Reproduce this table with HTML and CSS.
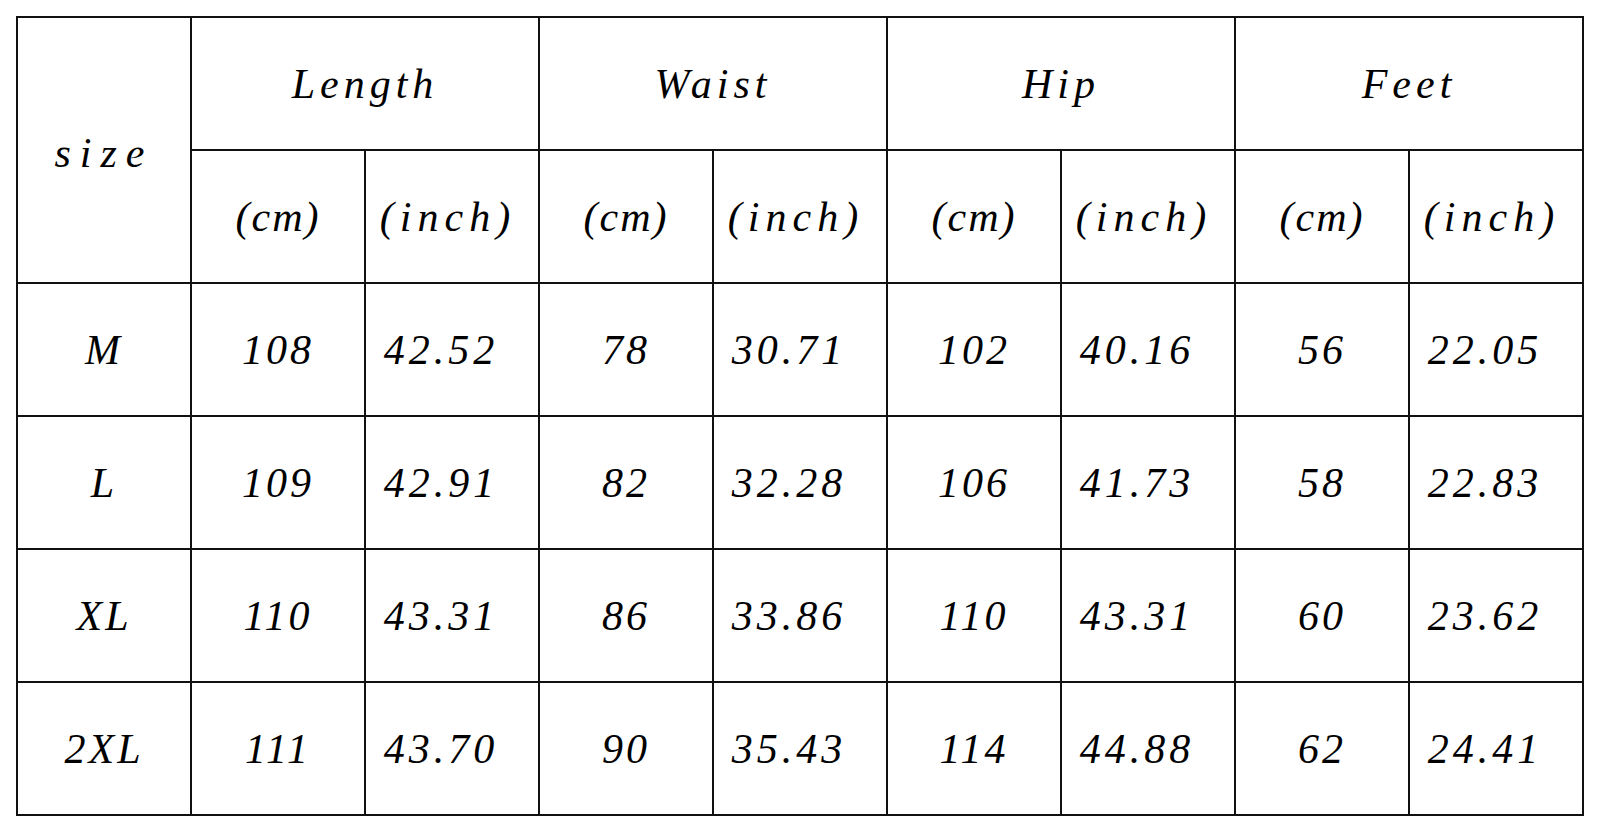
FILE: index.html
```html
<!DOCTYPE html>
<html>
<head>
<meta charset="utf-8">
<link rel="stylesheet" href="styles.css">
</head>
<body>
<table class="size-table">
  <tr>
    <td class="head size" rowspan="2">size</td>
    <td class="head" colspan="2">Length</td>
    <td class="head" colspan="2">Waist</td>
    <td class="head" colspan="2">Hip</td>
    <td class="head" colspan="2">Feet</td>
  </tr>
  <tr>
    <td class="unit">(cm)</td><td class="unit inch">(inch)</td>
    <td class="unit">(cm)</td><td class="unit inch">(inch)</td>
    <td class="unit">(cm)</td><td class="unit inch">(inch)</td>
    <td class="unit">(cm)</td><td class="unit inch">(inch)</td>
  </tr>
  <tr>
    <td class="label">M</td>
    <td class="num">108</td><td class="num inch">42.52</td>
    <td class="num">78</td><td class="num inch">30.71</td>
    <td class="num">102</td><td class="num inch">40.16</td>
    <td class="num">56</td><td class="num inch">22.05</td>
  </tr>
  <tr>
    <td class="label">L</td>
    <td class="num">109</td><td class="num inch">42.91</td>
    <td class="num">82</td><td class="num inch">32.28</td>
    <td class="num">106</td><td class="num inch">41.73</td>
    <td class="num">58</td><td class="num inch">22.83</td>
  </tr>
  <tr>
    <td class="label">XL</td>
    <td class="num">110</td><td class="num inch">43.31</td>
    <td class="num">86</td><td class="num inch">33.86</td>
    <td class="num">110</td><td class="num inch">43.31</td>
    <td class="num">60</td><td class="num inch">23.62</td>
  </tr>
  <tr>
    <td class="label">2XL</td>
    <td class="num">111</td><td class="num inch">43.70</td>
    <td class="num">90</td><td class="num inch">35.43</td>
    <td class="num">114</td><td class="num inch">44.88</td>
    <td class="num">62</td><td class="num inch">24.41</td>
  </tr>
</table>
</body>
</html>
```
FILE: styles.css
```css
html, body {
  margin: 0;
  padding: 0;
  background: #ffffff;
}

body {
  padding: 16px 0 0 16px;
  font-family: "Liberation Serif", "Times New Roman", serif;
  font-style: italic;
  color: #000;
}

.size-table {
  border-collapse: separate;
  border-spacing: 0;
  table-layout: fixed;
  width: 1568px;
  border-top: 2px solid #111;
  border-left: 2px solid #111;
}

.size-table td {
  border-right: 2px solid #111;
  border-bottom: 2px solid #111;
  height: 131px;
  padding: 0;
  text-align: center;
  vertical-align: middle;
  font-size: 42px;
  line-height: 1;
  white-space: nowrap;
}

.head {
  letter-spacing: 5px;
  padding-top: 4px;
}

.size-table td.size {
  letter-spacing: 9px;
  padding-top: 6px;
}

.unit {
  letter-spacing: 2px;
  padding-top: 4px;
}

.size-table td.unit.inch {
  letter-spacing: 6px;
  padding-right: 8px;
}

.label {
  letter-spacing: 3px;
  padding-top: 4px;
}

.num {
  letter-spacing: 3px;
  padding-top: 4px;
}

.size-table td.num.inch {
  letter-spacing: 4px;
  padding-right: 22px;
}
```
